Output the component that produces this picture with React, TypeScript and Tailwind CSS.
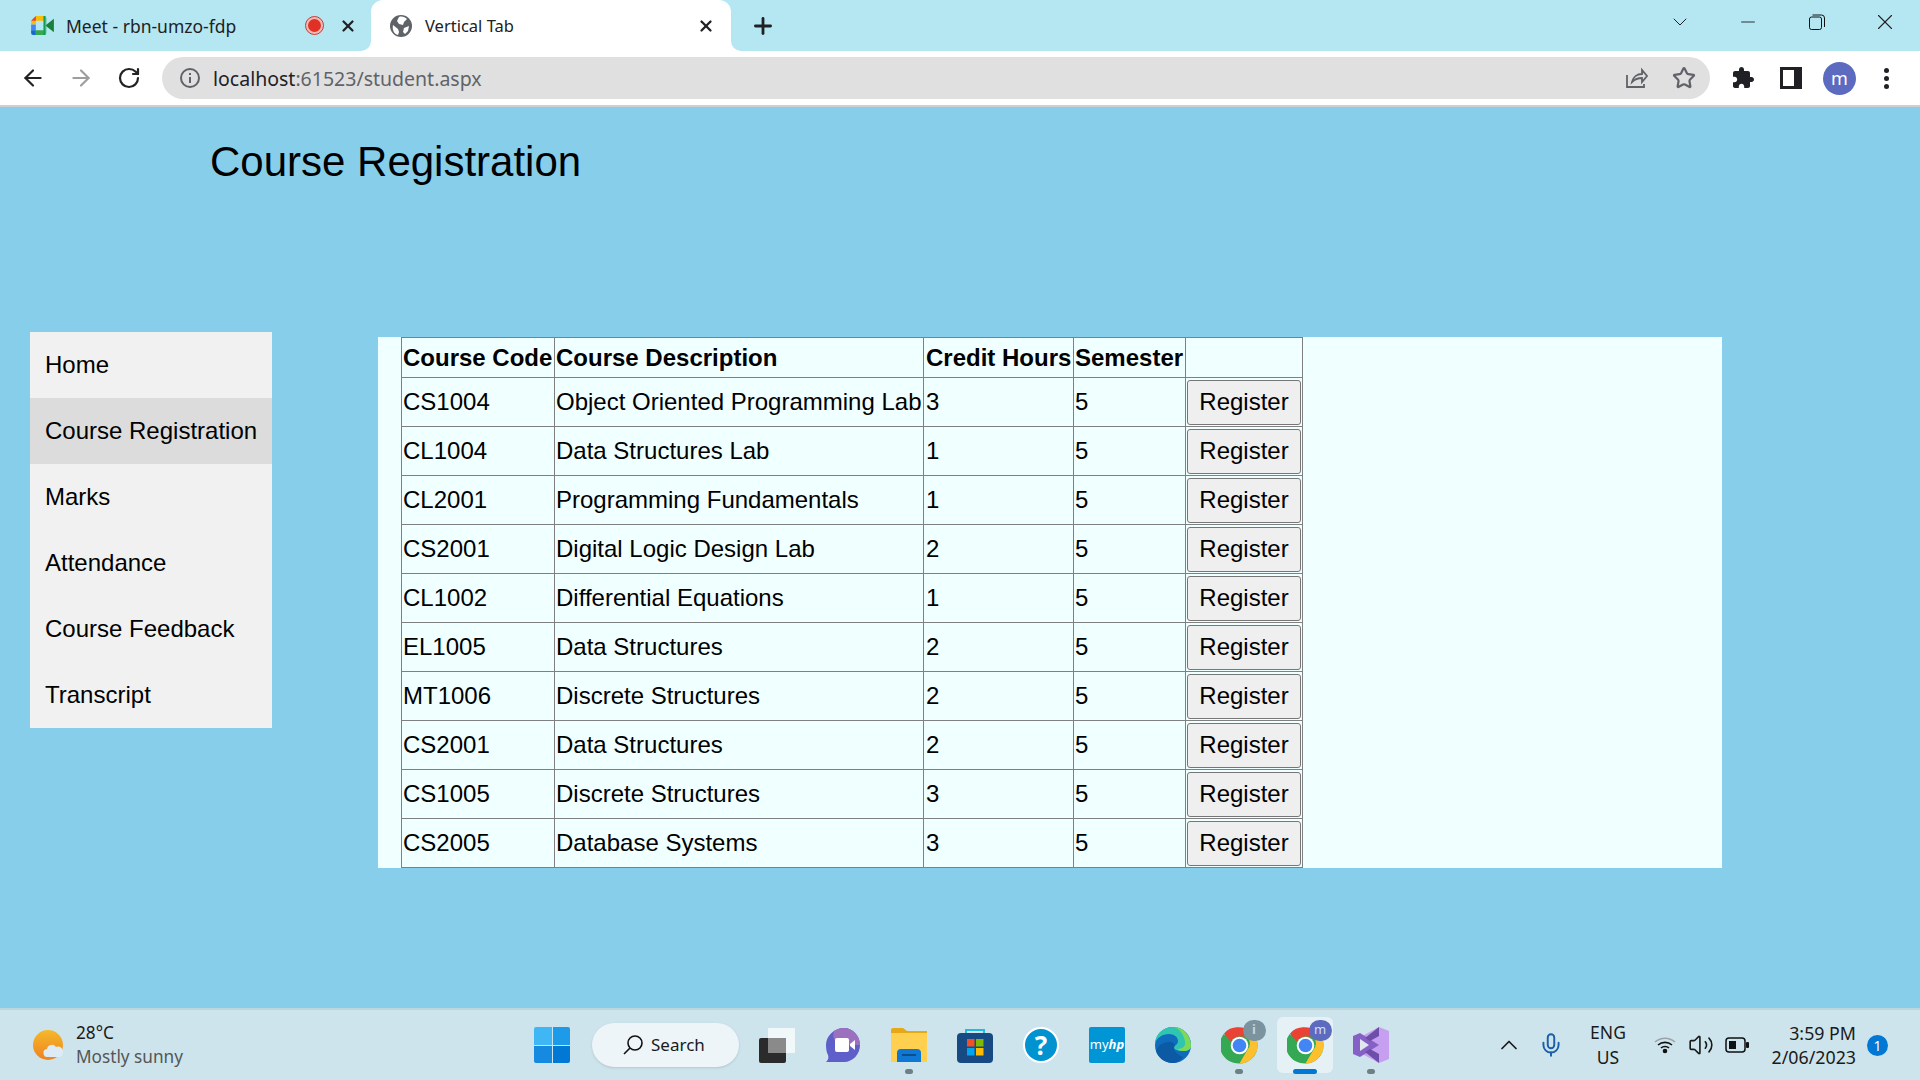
import React from "react";
import { ArrowLeft, ArrowRight, RotateCw, Star, Plus, X, ChevronDown, ChevronUp, Minus, Mic, Volume2 } from "lucide-react";

const menuItems = ["Home", "Course Registration", "Marks", "Attendance", "Course Feedback", "Transcript"];

const courses = [
    ["CS1004", "Object Oriented Programming Lab", "3", "5"],
    ["CL1004", "Data Structures Lab", "1", "5"],
    ["CL2001", "Programming Fundamentals", "1", "5"],
    ["CS2001", "Digital Logic Design Lab", "2", "5"],
    ["CL1002", "Differential Equations", "1", "5"],
    ["EL1005", "Data Structures", "2", "5"],
    ["MT1006", "Discrete Structures", "2", "5"],
    ["CS2001", "Data Structures", "2", "5"],
    ["CS1005", "Discrete Structures", "3", "5"],
    ["CS2005", "Database Systems", "3", "5"],
];

const MeetIcon = () => (
    <svg width="23" height="19" viewBox="0 0 24 20">
        <path d="M5 0h10v5H5v4H0V5z" fill="#fbbc04" />
        <path d="M5 0v5H0z" fill="#ea4335" />
        <path d="M0 9h5v6H0z" fill="#4285f4" />
        <path d="M0 15h5v5H2a2 2 0 0 1-2-2z" fill="#1967d2" />
        <path d="M5 15h10v5H5z" fill="#34a853" />
        <path d="M15 0v20h-2V0z" fill="#0f9d58" />
        <path d="M15 10l9-7v14z" fill="#188038" />
        <path d="M15 0h-1a2 2 0 0 1 2 2v16a2 2 0 0 1-2 2h1z" fill="#34a853" />
    </svg>
);

const GlobeIcon = () => (
    <svg width="22" height="22" viewBox="0 0 22 22">
        <circle cx="11" cy="11" r="11" fill="#5f6368" />
        <path d="M9 2c3-1 6 0 8 2l-3 3-1 3-4-1-2-3zM3 10l5 4 1 3-1 3c-4-1-6-5-5-10zM14 13l5-2-1 5-3 3-2-2z" fill="#fff" />
    </svg>
);

const PuzzleIcon = () => (
    <svg width="24" height="24" viewBox="0 0 24 24" fill="#202124">
        <path d="M20.5 11H19V7c0-1.1-.9-2-2-2h-4V3.5C13 2.12 11.88 1 10.5 1S8 2.12 8 3.5V5H4c-1.1 0-1.99.9-1.99 2v3.8H3.5c1.49 0 2.7 1.21 2.7 2.7s-1.21 2.7-2.7 2.7H2V20c0 1.1.9 2 2 2h3.8v-1.5c0-1.49 1.21-2.7 2.7-2.7 1.49 0 2.7 1.21 2.7 2.7V22H17c1.1 0 2-.9 2-2v-4h1.5c1.38 0 2.5-1.12 2.5-2.5S21.88 11 20.5 11z" />
    </svg>
);

const ChromeLogo = () => (
    <svg width="37" height="37" viewBox="0 0 38 38">
        <circle cx="19" cy="19" r="18.5" fill="#34a853" />
        <path d="M19 .5a18.5 18.5 0 0 1 16 9.2H19a9.3 9.3 0 0 0-8.4 5.4L3 6.9A18.5 18.5 0 0 1 19 .5z" fill="#ea4335" />
        <path d="M3 6.9l8.1 14A9.3 9.3 0 0 0 19 28.3l-5 8.5A18.5 18.5 0 0 1 3 6.9z" fill="#34a853" />
        <path d="M35 9.700A18.500 18.500 0 0 1 19 37.500l8-13.900A9.300 9.300 0 0 0 26 9.700z" fill="#fbc02d" />
        <circle cx="19" cy="19" r="9" fill="#fff" />
        <circle cx="19" cy="19" r="7" fill="#4285f4" />
    </svg>
);

const TaskbarIcons = () => (
    <>
        {/* task view */}
        <div className="w-[66px] h-[70px] flex items-center justify-center">
            <svg width="36" height="35" viewBox="0 0 36 35">
                <rect x="0" y="10" width="27" height="25" rx="2" fill="#2b2b2b" />
                <rect x="9" y="0" width="27" height="25" rx="1" fill="#ffffff" fillOpacity="0.72" />
                <rect x="9" y="10" width="18" height="15" fill="#8a8a8a" />
            </svg>
        </div>
        {/* chat */}
        <div className="w-[66px] h-[70px] flex items-center justify-center">
            <svg width="36" height="35" viewBox="0 0 36 35">
                <path d="M19 0c9 0 16 8 16 17s-7 17-16 17H1c2-2 3-4 2-7C1.500 24 1 21 1 17 1 8 9 0 19 0z" fill="#5f5fc9" />
                <path d="M19 0c9 0 16 8 16 17H20C12 17 6 11 9 3c3-2 6-3 10-3z" fill="#9a70bf" />
                <rect x="10" y="10" width="14" height="14" rx="2" fill="#fff" />
                <path d="M25 16l5-4v10l-5-4z" fill="#fff" />
            </svg>
        </div>
        {/* explorer */}
        <div className="relative w-[66px] h-[70px] flex items-center justify-center">
            <svg width="36" height="34" viewBox="0 0 36 34">
                <path d="M0 2a2 2 0 0 1 2-2h10l4 3h20v31H0z" fill="#e6a817" />
                <rect x="0" y="5" width="36" height="29" fill="#ffd04f" />
                <path d="M6 34v-9a4 4 0 0 1 4-4h16a4 4 0 0 1 4 4v9z" fill="#0f78d4" />
                <rect x="11" y="26" width="14" height="2" fill="#0b4f8a" />
            </svg>
            <div className="absolute top-[59px] w-[8px] h-[5px] rounded-full bg-[#6e7f86]" />
        </div>
        {/* store */}
        <div className="w-[66px] h-[70px] flex items-center justify-center">
            <svg width="36" height="35" viewBox="0 0 36 35">
                <path d="M9 7V2h18v5" fill="none" stroke="#22b8e8" strokeWidth="2" />
                <rect x="0" y="5" width="36" height="30" rx="4" fill="#174a82" />
                <rect x="10" y="11" width="7.500" height="7.500" fill="#f25022" />
                <rect x="19" y="11" width="7.500" height="7.500" fill="#7fba00" />
                <rect x="10" y="20" width="7.500" height="7.500" fill="#00a4ef" />
                <rect x="19" y="20" width="7.500" height="7.500" fill="#ffb900" />
            </svg>
        </div>
        {/* help */}
        <div className="w-[66px] h-[70px] flex items-center justify-center">
            <div className="w-[36px] h-[36px] flex items-center justify-center rounded-full bg-[#0093d0] border-2 border-white text-white text-[26px] font-bold">?</div>
        </div>
        {/* myhp */}
        <div className="w-[66px] h-[70px] flex items-center justify-center">
            <div className="w-[36px] h-[36px] flex items-center justify-center bg-[#0096d6] text-white text-[13px] rounded-[2px]">
                my<span className="italic font-bold">hp</span>
            </div>
        </div>
        {/* edge */}
        <div className="w-[66px] h-[70px] flex items-center justify-center">
            <svg width="36" height="36" viewBox="0 0 36 36">
                <circle cx="18" cy="18" r="18" fill="#0f6cbd" />
                <path d="M0 16C1 6 9 0 18 0c10 0 18 8 18 19 0 3-3 5-8 5-6 0-9-2-9-3 0-3 4-3 4-7 0-4-4-7-9-7C7 7 2 11 0 16z" fill="#2fc5b0" />
                <path d="M18 0c10 0 18 8 18 19 0 3-3 5-8 5-3 0-5-1-6-2 7 0 9-4 8-8C28 6 24 1 18 0z" fill="#7ed957" />
                <path d="M19 20c0 5 4 8 9 10-3 4-7 6-10 6-8 0-15-5-17-12 2-6 8-9 13-9 4 0 7 2 5 5z" fill="#0c59a4" />
            </svg>
        </div>
        {/* chrome with i badge */}
        <div className="relative w-[66px] h-[70px] flex items-center justify-center">
            <div className="relative">
                <ChromeLogo />
                <div className="absolute -top-[7px] -right-[8px] w-[23px] h-[21px] rounded-full bg-[#7b929f] flex items-center justify-center text-[#c7d3da] text-[13px] font-bold">i</div>
            </div>
            <div className="absolute top-[59px] w-[8px] h-[5px] rounded-full bg-[#6e7f86]" />
        </div>
        {/* active chrome with profile badge */}
        <div className="relative w-[66px] h-[70px] flex items-center justify-center">
            <div className="absolute top-[7px] left-[5px] w-[56px] h-[56px] rounded-[6px] bg-[#e6f1f6]" />
            <div className="relative">
                <ChromeLogo />
                <div className="absolute -top-[7px] -right-[8px] w-[23px] h-[21px] rounded-full bg-[#5c6bc0] flex items-center justify-center text-[#d8dcf3] text-[13px]">m</div>
            </div>
            <div className="absolute top-[59px] w-[24px] h-[5px] rounded-full bg-[#0078d4]" />
        </div>
        {/* visual studio */}
        <div className="relative w-[66px] h-[70px] flex items-center justify-center">
            <svg width="36" height="36" viewBox="0 0 36 36">
                <path d="M26 0l10 4v28l-10 4-26-14V14z" fill="#c79ff0" />
                <path d="M0 9l7-3 19 12-19 12-7-3z" fill="#8661c5" />
                <path d="M7 12l9 6-9 6z" fill="#dfe9ee" />
                <path d="M26 0L12 11l5 3 9-5z" fill="#6d4ea8" />
                <path d="M26 36L12 25l5-3 9 5z" fill="#6d4ea8" />
            </svg>
            <div className="absolute top-[59px] w-[8px] h-[5px] rounded-full bg-[#6e7f86]" />
        </div>
    </>
);

export default function App() {
    return (
        <div className="w-[1920px] h-[1080px] flex flex-col overflow-hidden bg-[#87ceeb] text-black font-['Liberation_Sans',Arial,sans-serif]">
            {/* Tab strip */}
            <div className="h-[51px] shrink-0 flex bg-[#b5e7f3] text-[#202124] font-['Noto_Sans',sans-serif]">
                <div className="w-[371px] flex items-center pl-[31px] text-[17.500px]">
                    <MeetIcon />
                    <span className="ml-[12px] mt-[1px] w-[240px] whitespace-nowrap">Meet - rbn-umzo-fdp</span>
                    <div className="w-[17px] h-[17px] rounded-full bg-[#e13124] border-2 border-[#f6b7b2] outline outline-[#d93025]" />
                    <X size={18} strokeWidth={3} className="ml-[16px]" />
                </div>
                <div className="relative w-[360px] flex items-center pl-[19px] bg-white rounded-t-[12px] text-[16.500px]">
                    <svg width="10" height="10" viewBox="0 0 10 10" fill="#fff" className="absolute bottom-0 -left-[10px]">
                        <path d="M10 0v10H0a10 10 0 0 0 10-10z" />
                    </svg>
                    <svg width="10" height="10" viewBox="0 0 10 10" fill="#fff" className="absolute bottom-0 -right-[10px]">
                        <path d="M0 0v10h10A10 10 0 0 1 0 0z" />
                    </svg>
                    <GlobeIcon />
                    <span className="ml-[13px] mt-[1px] w-[272px]">Vertical Tab</span>
                    <X size={18} strokeWidth={3} />
                </div>
                <div className="flex items-center ml-[19px]">
                    <Plus size={26} strokeWidth={2.6} />
                </div>
                <div className="flex items-center ml-auto pb-[8px]">
                    <ChevronDown size={24} strokeWidth={1} />
                    <Minus size={24} strokeWidth={1} className="ml-[45px] w-[22px]" />
                    <svg width="16" height="16" viewBox="0 0 16 16" fill="none" stroke="#111" className="ml-[50px]">
                        <rect x="0.500" y="3" width="12" height="12.500" rx="2" />
                        <path d="M3.500 1h9a3 3 0 0 1 3 3v9" />
                    </svg>
                    <X size={26} strokeWidth={1} className="ml-[47px] mr-[22px]" />
                </div>
            </div>

            {/* Toolbar */}
            <div className="h-[56px] shrink-0 flex items-center bg-white border-b-2 border-[#cfcfcf]">
                <ArrowLeft size={26} strokeWidth={2} color="#222" className="ml-[20px]" />
                <ArrowRight size={26} strokeWidth={2} color="#9e9e9e" className="ml-[22px]" />
                <RotateCw size={24} strokeWidth={2.2} color="#222" className="ml-[23px]" />
                <div className="ml-[21px] w-[1548px] h-[42px] flex items-center rounded-full bg-[#e0e0e0] font-['Noto_Sans',sans-serif] text-[19.500px]">
                    <svg width="22" height="22" viewBox="0 0 22 22" fill="none" stroke="#5f6368" strokeWidth="2" className="ml-[17px]">
                        <circle cx="11" cy="11" r="9" />
                        <path d="M11 10v6M11 6v2" />
                    </svg>
                    <span className="ml-[12px] mt-[1px] text-[#202124]">localhost</span>
                    <span className="mt-[1px] text-[#5f6368]">:61523/student.aspx</span>
                    <svg width="24" height="24" viewBox="0 0 24 24" fill="none" stroke="#5f6368" strokeWidth="1.800" className="ml-auto">
                        <path d="M3 9v12h17v-3M8 16c1-5 5-8 10-8V4l5 6-5 6v-4c-4 0-7 1-10 4z" />
                    </svg>
                    <Star size={24} strokeWidth={2.2} color="#5f6368" className="ml-[24px] mr-[14px]" />
                </div>
                <div className="ml-[21px]"><PuzzleIcon /></div>
                <svg width="22" height="22" viewBox="0 0 22 22" className="ml-[25px]">
                    <rect x="0" y="0" width="22" height="22" fill="#202124" />
                    <rect x="3" y="3" width="11" height="16" fill="#fff" />
                </svg>
                <div className="ml-[21px] w-[33px] h-[33px] rounded-full bg-[#5c6bc0] flex items-center justify-center text-white text-[18px] font-['Noto_Sans',sans-serif]">m</div>
                <div className="ml-[28px] flex flex-col gap-[3px]">
                    <div className="w-[5px] h-[5px] rounded-full bg-[#202124]" />
                    <div className="w-[5px] h-[5px] rounded-full bg-[#202124]" />
                    <div className="w-[5px] h-[5px] rounded-full bg-[#202124]" />
                </div>
            </div>

            {/* Page */}
            <div className="flex-1 min-h-0">
                <h1 className="ml-[210px] mt-[31px] h-[48px] text-[42px] leading-[48px] font-normal">Course Registration</h1>
                <div className="flex mt-[146px]">
                    <ul className="ml-[30px] w-[242px] h-[396px] bg-[#f1f1f1]">
                        {menuItems.map((item) => (
                            <li
                                key={item}
                                className={
                                    item === "Course Registration"
                                        ? "h-[66px] px-[15px] flex items-center text-[24px] whitespace-nowrap bg-[#dcdcdc]"
                                        : "h-[66px] px-[15px] flex items-center text-[24px] whitespace-nowrap"
                                }
                            >
                                {item}
                            </li>
                        ))}
                    </ul>
                    <div className="ml-[106px] mt-[5px] w-[1344px] h-[531px] pl-[23px] bg-[#f0ffff]">
                        <table className="table-fixed w-[901px] text-[24px] border border-[#808080]">
                            <thead>
                                <tr className="h-[40px]">
                                    <th className="w-[153px] px-px text-left font-bold border border-[#808080] whitespace-nowrap">Course Code</th>
                                    <th className="w-[369px] pl-px text-left font-bold border border-[#808080] whitespace-nowrap">Course Description</th>
                                    <th className="w-[150px] pl-[2px] text-left font-bold border border-[#808080] whitespace-nowrap">Credit Hours</th>
                                    <th className="w-[112px] px-px text-left font-bold border border-[#808080] whitespace-nowrap">Semester</th>
                                    <th className="w-[117px] border border-[#808080]"></th>
                                </tr>
                            </thead>
                            <tbody>
                                {courses.map((row, idx) => (
                                    <tr key={idx} className="h-[49px]">
                                        <td className="px-px border border-[#808080]">{row[0]}</td>
                                        <td className="pl-px border border-[#808080] whitespace-nowrap">{row[1]}</td>
                                        <td className="pl-[2px] border border-[#808080]">{row[2]}</td>
                                        <td className="px-px border border-[#808080]">{row[3]}</td>
                                        <td className="px-px border border-[#808080] align-middle">
                                            <button className="block mx-auto w-[114px] h-[45px] bg-[#efefef] border border-[#767676] rounded-[3px] text-center">Register</button>
                                        </td>
                                    </tr>
                                ))}
                            </tbody>
                        </table>
                    </div>
                </div>
            </div>

            {/* Taskbar */}
            <div className="h-[72px] shrink-0 flex items-center border-t-2 border-[#bcd6dd] bg-[#cde4ec] font-['Noto_Sans',sans-serif] text-[#1a1a1a]">
                <div className="ml-[33px] w-[43px] shrink-0">
                    <svg width="32" height="32" viewBox="0 0 32 32">
                        <defs>
                            <linearGradient id="sun" x1="0" y1="0" x2="0" y2="1">
                                <stop offset="0" stopColor="#f5b92c" />
                                <stop offset="1" stopColor="#f0821e" />
                            </linearGradient>
                        </defs>
                        <circle cx="15" cy="16" r="15" fill="url(#sun)" />
                        <path d="M15 28a4 4 0 0 1-1-8 5 5 0 0 1 9-2 5 5 0 0 1 7 5 5 5 0 0 1-3 5z" fill="#dcebf5" />
                    </svg>
                </div>
                <div className="w-[458px] shrink-0 flex flex-col text-[17.200px] leading-[24px]">
                    <span>28°C</span>
                    <span className="text-[#555]">Mostly sunny</span>
                </div>
                <div className="grid grid-cols-2 gap-[1px] w-[36px] h-[36px] shrink-0">
                    <div className="bg-[#3fb7f5] rounded-tl-[2px]" />
                    <div className="bg-[#1e9be8] rounded-tr-[2px]" />
                    <div className="bg-[#1689e0] rounded-bl-[2px]" />
                    <div className="bg-[#0078d4] rounded-br-[2px]" />
                </div>
                <div className="ml-[22px] w-[147px] h-[44px] shrink-0 flex items-center pl-[30px] rounded-full bg-[#edf5f9] text-[17px] shadow-sm">
                    <svg width="22" height="22" viewBox="0 0 22 22" fill="none" stroke="#111" strokeWidth="1.600">
                        <circle cx="13" cy="9" r="7" />
                        <path d="M8 14l-6 6" />
                    </svg>
                    <span className="ml-[7px]">Search</span>
                </div>
                <div className="ml-[5px] flex shrink-0"><TaskbarIcons /></div>
                <ChevronUp size={28} strokeWidth={1.5} className="ml-[91px] shrink-0" />
                <Mic size={26} strokeWidth={1.8} color="#1b5fa8" className="ml-[15px] shrink-0" />
                <div className="ml-[19px] w-[50px] shrink-0 flex flex-col items-center text-[17.500px] leading-[25px]">
                    <span>ENG</span>
                    <span>US</span>
                </div>
                <svg width="22" height="18" viewBox="0 0 22 18" fill="none" stroke="#111" strokeWidth="1.600" className="ml-[21px] shrink-0">
                    <path d="M1 6c6-5 14-5 20 0" stroke="#9aa5a9" />
                    <path d="M4 9c4-3.500 10-3.500 14 0M7 12c2-2 6-2 8 0" />
                    <circle cx="11" cy="15" r="1.500" fill="#111" />
                </svg>
                <Volume2 size={26} strokeWidth={1.5} className="ml-[12px] shrink-0" />
                <svg width="24" height="16" viewBox="0 0 24 16" fill="none" className="ml-[11px] shrink-0">
                    <rect x="1" y="1" width="19" height="14" rx="3" stroke="#111" strokeWidth="1.500" />
                    <rect x="4" y="4" width="7" height="8" fill="#111" />
                    <rect x="21" y="5" width="3" height="6" rx="1" fill="#111" />
                </svg>
                <div className="ml-auto mr-[11px] flex flex-col items-end text-[17.800px] leading-[24px] whitespace-nowrap">
                    <span>3:59 PM</span>
                    <span>2/06/2023</span>
                </div>
                <div className="mr-[32px] w-[21px] h-[21px] shrink-0 rounded-full bg-[#0078d4] flex items-center justify-center text-white text-[14px]">1</div>
            </div>
        </div>
    );
}
